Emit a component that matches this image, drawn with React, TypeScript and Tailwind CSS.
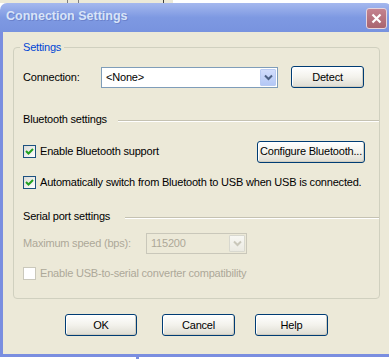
import React from 'react';

const FONT = "font-['Liberation_Sans',Arial,sans-serif]";

function XpButton({ label, className = '' }: { label: string; className?: string }) {
  return (
    <button
      className={`h-[22px] px-0 whitespace-nowrap rounded-[3px] border border-[#003c74] bg-linear-to-b from-white via-[#f3f2ec] to-[#dedcd2] text-[11px] tracking-[-0.2px] text-black leading-none shadow-[inset_-1px_-1px_0_#d0cdc0,inset_1px_1px_0_#ffffff] ${className}`}
    >
      {label}
    </button>
  );
}

function Chevron({ color }: { color: string }) {
  return (
    <svg width="9" height="7" viewBox="0 0 9 7">
      <path d="M1 1.5 L4.5 5 L8 1.5" fill="none" stroke={color} strokeWidth="2" />
    </svg>
  );
}

function Select({ value, width, disabled }: { value: string; width: string; disabled?: boolean }) {
  return (
    <div
      className={`${width} h-[21px] flex items-center border ${
        disabled ? 'border-[#c9c7ba] bg-[#ece9d8] text-[#aca899]' : 'border-[#7f9db9] bg-white text-black'
      }`}
    >
      <span className="flex-1 pl-[4px] text-[11px] tracking-[-0.2px]">{value}</span>
      <span
        className={`w-[16px] h-[17px] mr-[1px] flex items-center justify-center rounded-[1px] border ${
          disabled
            ? 'border-[#d8d8cf] bg-linear-to-b from-[#f7f7f3] to-[#ebeae2]'
            : 'border-[#b9cbf3] bg-linear-to-b from-[#d2ddfc] to-[#b4c8f6]'
        }`}
      >
        <Chevron color={disabled ? '#c9c7ba' : '#4d6185'} />
      </span>
    </div>
  );
}

function Checkbox({ checked, disabled }: { checked?: boolean; disabled?: boolean }) {
  return (
    <span
      className={`w-[13px] h-[13px] shrink-0 flex items-center justify-center border ${
        disabled ? 'border-[#cac8bb] bg-white' : 'border-[#1c5180] bg-linear-to-br from-[#dcdcd7] to-white'
      }`}
    >
      {checked && (
        <svg width="9" height="9" viewBox="0 0 9 9">
          <path d="M1 4 L3.5 6.5 L8 2" fill="none" stroke="#21a121" strokeWidth="2" />
        </svg>
      )}
    </span>
  );
}

function SectionHeader({ label, labelWidth }: { label: string; labelWidth: string }) {
  return (
    <div className="h-[14px] flex items-center">
      <span className={`${labelWidth} text-[11px] tracking-[-0.2px] text-black`}>{label}</span>
      <div className="flex-1 h-[2px] border-t border-[#c5c2b2] border-b border-b-white mt-[3px]" />
    </div>
  );
}

export default function App() {
  return (
    <div className={`w-[389px] h-[359px] overflow-hidden bg-white ${FONT}`}>
      {/* Window behind, bottom edge only */}
      <div className="h-[3px] overflow-hidden flex">
        <div className="w-[173px] h-[3px] bg-[#ece9d8] flex text-[11px] leading-[13px] text-black">
          <span className="ml-[8px] -mt-[10px] w-[59px]">Next &gt;</span>
          <span className="w-[1px] bg-[#808080]" />
          <span className="w-[10px]" />
          <span className="w-[1px] bg-[#808080]" />
          <span className="ml-[27px] -mt-[10px] w-[57px]">Cancel</span>
          <span className="w-[1px] bg-[#404040]" />
        </div>
      </div>

      {/* Dialog */}
      <div className="w-[392px] flex flex-col">
        {/* Title bar */}
        <div className="h-[29px] rounded-tl-[7px] rounded-tr-[7px] bg-linear-to-b from-[#a5b8ee] via-[#7e99e2] to-[#7893df] flex items-center pl-[6px] pr-[5px]">
          <span className="flex-1 text-[12.5px] font-bold text-[#d8e4f8] [text-shadow:1px_1px_0_#6b82cc] mt-[-2px]">
            Connection Settings
          </span>
          <span className="w-[21px] h-[21px] rounded-[3px] border border-[#e6d4dc] bg-linear-to-b from-[#c48390] to-[#a8646f] flex items-center justify-center mt-[1px]">
            <svg width="11" height="11" viewBox="0 0 11 11">
              <path d="M1.5 1.5 L9.5 9.5 M9.5 1.5 L1.5 9.5" stroke="#ffffff" strokeWidth="2.2" />
            </svg>
          </span>
        </div>

        {/* Body with frame */}
        <div className="border-l-[3px] border-b-[3px] border-[#7a8ee0] bg-[#ece9d8] h-[325px] flex flex-col">
          {/* Group box */}
          <div className="relative ml-[10px] mt-[15px] w-[367px] border border-[#d0d0bf] rounded-[4px] pl-[9px] pb-[18px]">
            <span className="absolute left-[6px] top-[-7px] px-[3px] bg-[#ece9d8] text-[11px] tracking-[-0.2px] leading-[13px] text-[#0046d5]">
              Settings
            </span>

            <div className="mt-[18px] pr-[14px] flex items-center">
              <span className="w-[78px] text-[11px] tracking-[-0.2px] text-black">Connection:</span>
              <Select value="<None>" width="w-[177px]" />
              <XpButton label="Detect" className="ml-[13px] w-[73px]" />
            </div>

            <div className="mt-[24px]">
              <SectionHeader label="Bluetooth settings" labelWidth="w-[95px]" />
            </div>

            <div className="mt-[15px] pr-[14px] h-[21px] flex items-center">
              <Checkbox checked />
              <span className="ml-[4px] flex-1 text-[11px] tracking-[-0.2px] text-black">Enable Bluetooth support</span>
              <XpButton label="Configure Bluetooth..." className="w-[108px]" />
            </div>

            <div className="mt-[13px] h-[14px] flex items-center">
              <Checkbox checked />
              <span className="ml-[4px] text-[11px] tracking-[-0.2px] text-black whitespace-nowrap">
                Automatically switch from Bluetooth to USB when USB is connected.
              </span>
            </div>

            <div className="mt-[20px]">
              <SectionHeader label="Serial port settings" labelWidth="w-[102px]" />
            </div>

            <div className="mt-[10px] flex items-center">
              <span className="w-[123px] text-[11px] tracking-[-0.2px] text-[#aca899]">Maximum speed (bps):</span>
              <Select value="115200" width="w-[101px]" disabled />
            </div>

            <div className="mt-[12px] h-[14px] flex items-center">
              <Checkbox disabled />
              <span className="ml-[4px] text-[11px] tracking-[-0.2px] text-[#aca899]">
                Enable USB-to-serial converter compatibility
              </span>
            </div>
          </div>

          {/* Dialog buttons */}
          <div className="mt-[15px] flex">
            <XpButton label="OK" className="ml-[62px] w-[72px]" />
            <XpButton label="Cancel" className="ml-[25px] w-[73px]" />
            <XpButton label="Help" className="ml-[20px] w-[73px]" />
          </div>
        </div>

        <div className="h-[2px] flex">
          <span className="ml-[136px] w-[3px] bg-[#7a8ee0]" />
        </div>
      </div>
    </div>
  );
}
